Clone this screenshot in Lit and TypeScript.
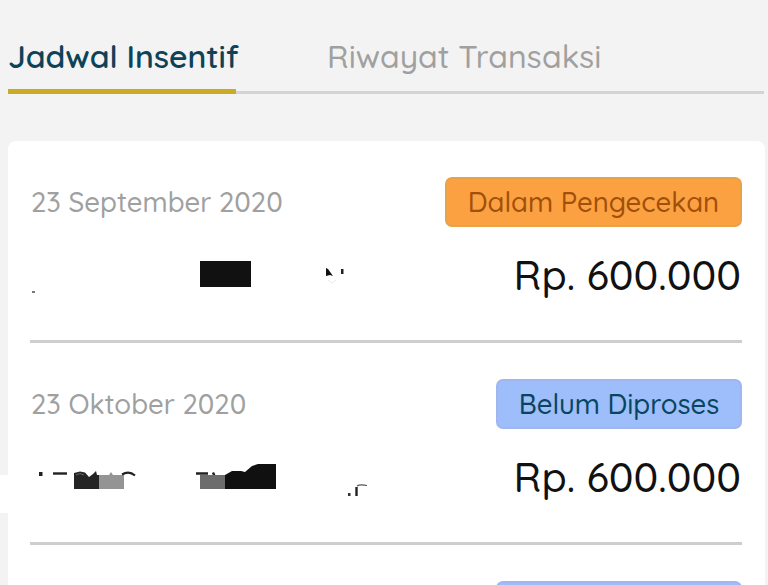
import { LitElement, html, css, svg, nothing } from "lit";
import { customElement, property } from "lit/decorators.js";

type Row = { date?: string; status?: string; amount?: string; kind: "check" | "wait"; mask: number };

const ROWS: Row[] = [
  { date: "23 September 2020", status: "Dalam Pengecekan", amount: "Rp. 600.000", kind: "check", mask: 0 },
  { date: "23 Oktober 2020", status: "Belum Diproses", amount: "Rp. 600.000", kind: "wait", mask: 1 },
  { kind: "wait", mask: 2 },
];

// Remnants of the hidden account holder line, one drawing per row.
const MASKS = [
  svg`<rect x="170" y="13" width="51" height="26" fill="#111"/>
    <rect x="2" y="43" width="3" height="2" fill="#777"/>
    <path d="M296 20L298 21L303 28L300 27L296 28Z" fill="#111"/>
    <rect x="311" y="21" width="2.5" height="5" fill="#222"/>
    <path d="M298 32l4 3l4 -3" fill="none" stroke="#e8e8e8"/>`,
  svg`<rect x="9" y="22" width="3.5" height="4" fill="#222"/>
    <path d="M23 23.500H37" stroke="#222" stroke-width="2.400"/>
    <path d="M44 39V23L50 21.500L55 22.500L59 27L63 24L66 21L67 25H69V39Z" fill="#242424"/>
    <path d="M46 25Q50 22 54 25" fill="none" stroke="#666"/>
    <path d="M69 25H79L81 22L83 25H94V39H69Z" fill="#949494"/>
    <path d="M92 24.500Q99 20.500 105 25.500" fill="none" stroke="#222" stroke-width="2.200"/>
    <path d="M166 23.500H178M183 22.500L184.500 26" fill="none" stroke="#222" stroke-width="2.400"/>
    <rect x="170" y="25" width="26" height="14" fill="#6c6c6c"/>
    <path d="M195 39V25L202 21H211L215 22L222 16L228 14H246V39Z" fill="#101010"/>
    <rect x="318" y="43" width="2.500" height="3" fill="#333"/>
    <path d="M326.500 46V37" stroke="#222" stroke-width="2.400"/>
    <path d="M327 36Q330 34 337 35.500" fill="none" stroke="#555" stroke-width="1.200"/>`,
  nothing,
];

@customElement("incentive-row")
class IncentiveRow extends LitElement {
  @property({ attribute: false }) row!: Row;

  static styles = css`
    :host { display: block; height: 202px; box-sizing: border-box; padding-top: 36px; }
    .line { display: flex; justify-content: space-between; }
    .top { height: 50px; }
    .date { margin-left: 1px; font-size: 27.5px; line-height: 49px; font-weight: 500; color: #a0a0a0; white-space: nowrap; }
    .badge {
      display: flex; align-items: center; justify-content: center; box-sizing: border-box;
      height: 50px; border-radius: 7px; margin-left: auto; padding-bottom: 2px;
      font-size: 27.5px; font-weight: 500; white-space: nowrap;
    }
    .check { width: 297px; background: #fca141; border: 2px solid #e6a347; color: #a0500a; }
    .wait { width: 246px; background: #9dbdfb; border: 2px solid #a1b6ee; color: #08465e; }
    .bottom { height: 113px; padding-top: 21px; box-sizing: border-box; }
    .mask { width: 350px; height: 60px; display: block; }
    .amount { margin-right: 1px; font-size: 41.2px; line-height: 53px; color: #111; font-weight: 500; white-space: nowrap; }
    .rule { height: 3px; background: #cecece; }
  `;

  render() {
    const r = this.row;
    return html`
      <div class="line top">
        ${r.date ? html`<span class="date">${r.date}</span>` : nothing}
        <span class="badge ${r.kind}">${r.status ?? nothing}</span>
      </div>
      <div class="line bottom">
        <svg class="mask" viewBox="0 0 350 60">${MASKS[r.mask]}</svg>
        ${r.amount ? html`<span class="amount">${r.amount}</span>` : nothing}
      </div>
      <div class="rule"></div>
    `;
  }
}

@customElement("app-root")
class AppRoot extends LitElement {
  static styles = css`
    :host {
      display: block; height: 585px; overflow: hidden; position: relative;
      background: #f3f3f3; font-family: Quicksand, Lato, sans-serif;
    }
    .tabs {
      display: flex; align-items: flex-end; height: 94px; box-sizing: border-box;
      margin: 0 4px 0 8px; box-shadow: inset 0 -3px #d4d4d4;
    }
    .tab { height: 61px; font-size: 32px; line-height: 46px; white-space: nowrap; box-sizing: border-box; color: #a0a0a0; font-weight: 500; }
    .active { width: 228px; margin-right: 91px; color: #0e4257; font-weight: 600; letter-spacing: -0.1px; border-bottom: 5px solid #c9ac24; }
    .card {
      margin: 47px 3px 0 8px; height: 600px; background: #fff; border-radius: 8px;
      padding: 0 23px 0 22px; box-sizing: border-box;
    }
    .notch { position: absolute; left: 0; top: 475px; width: 12px; height: 38px; background: #fff; }
  `;

  render() {
    return html`
      <nav class="tabs">
        <span class="tab active">Jadwal Insentif</span>
        <span class="tab">Riwayat Transaksi</span>
      </nav>
      <main class="card">${ROWS.map((r) => html`<incentive-row .row=${r}></incentive-row>`)}</main>
      <div class="notch"></div>
    `;
  }
}
